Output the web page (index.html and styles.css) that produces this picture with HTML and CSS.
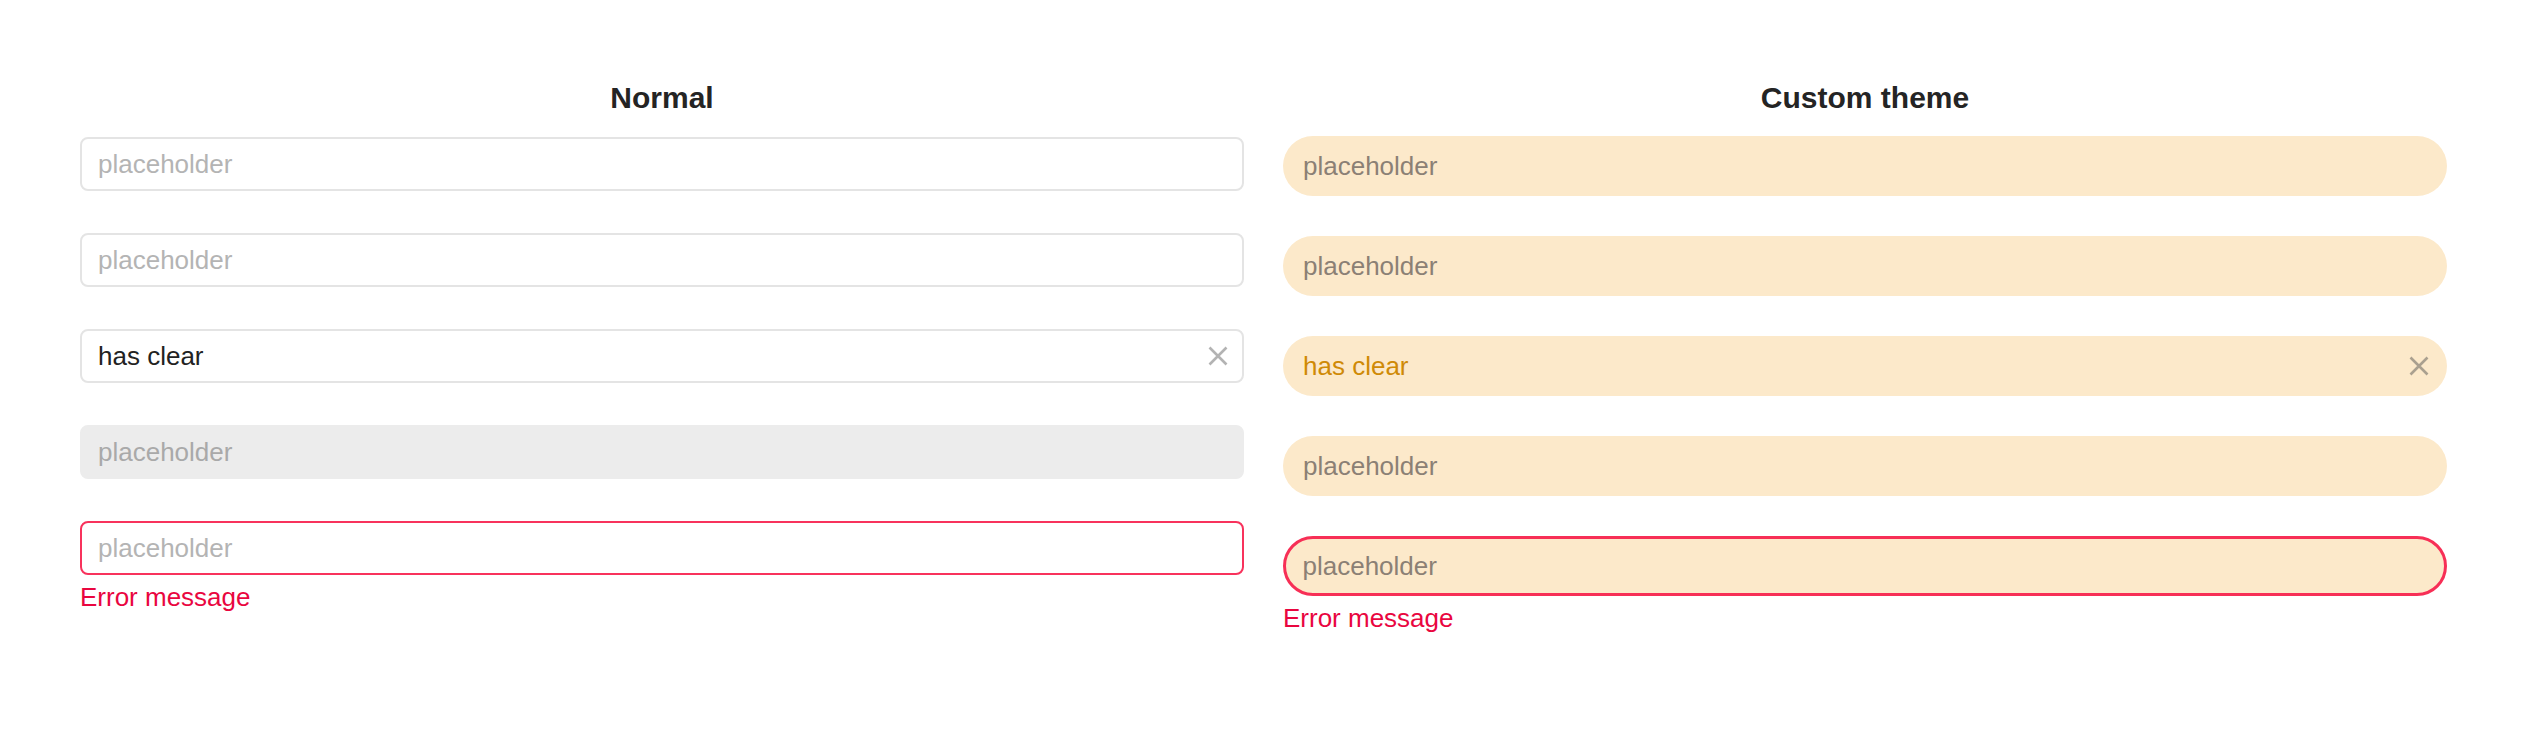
FILE: index.html
```html
<!DOCTYPE html>
<html lang="en">
<head>
<meta charset="utf-8">
<title>Input demo</title>
<link rel="stylesheet" href="styles.css">
</head>
<body>
<main class="page">
  <section class="panel">
    <h2 class="panel-title">Normal</h2>
    <div class="fields fields-normal">
      <div class="field">
        <div class="input"><input class="control" placeholder="placeholder"></div>
      </div>
      <div class="field">
        <div class="input"><input class="control" placeholder="placeholder"></div>
      </div>
      <div class="field">
        <div class="input">
          <input class="control" value="has clear">
          <button class="clear" type="button" aria-label="clear">
            <svg viewBox="0 0 20 20" width="20" height="20"><path d="M1.5 1.5 L18.5 18.5 M18.5 1.5 L1.5 18.5" /></svg>
          </button>
        </div>
      </div>
      <div class="field">
        <div class="input is-disabled"><input class="control" placeholder="placeholder" disabled></div>
      </div>
      <div class="field">
        <div class="input is-error"><input class="control" placeholder="placeholder"></div>
        <div class="error-msg">Error message</div>
      </div>
    </div>
  </section>

  <section class="panel">
    <h2 class="panel-title">Custom theme</h2>
    <div class="fields fields-theme">
      <div class="field">
        <div class="input theme"><input class="control" placeholder="placeholder"></div>
      </div>
      <div class="field">
        <div class="input theme"><input class="control" placeholder="placeholder"></div>
      </div>
      <div class="field">
        <div class="input theme">
          <input class="control" value="has clear">
          <button class="clear" type="button" aria-label="clear">
            <svg viewBox="0 0 20 20" width="20" height="20"><path d="M1.5 1.5 L18.5 18.5 M18.5 1.5 L1.5 18.5" /></svg>
          </button>
        </div>
      </div>
      <div class="field">
        <div class="input theme is-disabled"><input class="control" placeholder="placeholder" disabled></div>
      </div>
      <div class="field">
        <div class="input theme is-error"><input class="control" placeholder="placeholder"></div>
        <div class="error-msg">Error message</div>
      </div>
    </div>
  </section>
</main>
</body>
</html>
```

FILE: styles.css
```css
* { box-sizing: border-box; }

html, body {
  margin: 0;
  padding: 0;
  background: #ffffff;
}

body {
  font-family: "Liberation Sans", Arial, sans-serif;
  color: #222222;
}

.page {
  display: grid;
  grid-template-columns: 1164px 1164px;
  column-gap: 39px;
  padding: 81px 80px 0 80px;
}

.panel {
  display: flex;
  flex-direction: column;
}

.panel-title {
  margin: 0;
  font-size: 30px;
  line-height: 34px;
  font-weight: 700;
  text-align: center;
  color: #242424;
}

.fields {
  display: flex;
  flex-direction: column;
}

.fields-normal {
  margin-top: 22px;
  gap: 42px;
}

.fields-theme {
  margin-top: 21px;
  gap: 40px;
}

.input {
  position: relative;
  display: flex;
  align-items: center;
  height: 54px;
  border: 2px solid #e4e4e4;
  border-radius: 8px;
  background: #ffffff;
  padding: 0 16px;
}

.control {
  flex: 1;
  min-width: 0;
  border: 0;
  outline: none;
  background: transparent;
  padding: 0;
  margin: 0;
  font-family: "Liberation Sans", Arial, sans-serif;
  font-size: 26px;
  line-height: 30px;
  color: #222222;
}

.control::placeholder {
  color: #b4b4b4;
  opacity: 1;
}

.input.is-disabled {
  background: #ececec;
  border-color: #ececec;
}

.input.is-disabled .control::placeholder {
  color: #a9a9a9;
}

.input.is-error {
  border-color: #f8325c;
}

.clear {
  display: flex;
  align-items: center;
  justify-content: center;
  width: 24px;
  height: 24px;
  margin-right: -4px;
  padding: 0;
  border: 0;
  background: transparent;
}

.clear svg {
  width: 20px;
  height: 20px;
  fill: none;
  stroke: #b3b3b3;
  stroke-width: 2.6;
}

.error-msg {
  margin-top: 8px;
  font-size: 26px;
  line-height: 28px;
  color: #e9063f;
}

/* custom theme */
.input.theme {
  height: 60px;
  border: 0;
  border-radius: 30px;
  background: #fce9ca;
  padding: 0 20px;
}

.input.theme .control {
  color: #cf8a06;
}

.input.theme .control::placeholder {
  color: #8b8075;
}

.input.theme.is-disabled {
  background: #fce9ca;
}

.input.theme.is-error {
  border: 3.5px solid #f72f56;
  padding: 0 16.5px;
}

.input.theme .clear {
  margin-right: -4px;
}

.input.theme .clear svg {
  stroke: #aaa08f;
}
```
